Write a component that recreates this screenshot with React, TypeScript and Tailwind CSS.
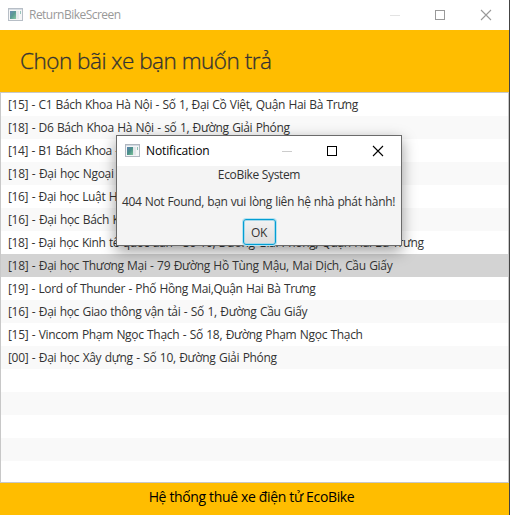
import React from "react";

const rows: { text: string; tracking: string }[] = [
  { text: "[15] - C1 Bách Khoa Hà Nội - Số 1, Đại Cồ Việt, Quận Hai Bà Trưng", tracking: "tracking-[-0.37px]" },
  { text: "[18] - D6 Bách Khoa Hà Nội - số 1, Đường Giải Phóng", tracking: "tracking-[-0.35px]" },
  { text: "[14] - B1 Bách Khoa - Số 1", tracking: "tracking-[-0.4px]" },
  { text: "[18] - Đại học Ngoại", tracking: "tracking-[-0.31px]" },
  { text: "[16] - Đại học Luật Hà Nội", tracking: "tracking-[-0.35px]" },
  { text: "[16] - Đại học Bách Khoa", tracking: "tracking-[-0.31px]" },
  { text: "[18] - Đại học Kinh tế quốc dân - Số 10, Đường Giải Phóng, Quận Hai Bà Trưng", tracking: "tracking-[-0.37px]" },
  { text: "[18] - Đại học Thương Mại - 79 Đường Hồ Tùng Mậu, Mai Dịch, Cầu Giấy", tracking: "tracking-[-0.33px]" },
  { text: "[19] - Lord of Thunder - Phố Hồng Mai,Quận Hai Bà Trưng", tracking: "tracking-[-0.38px]" },
  { text: "[16] - Đại học Giao thông vận tải - Số 1, Đường Cầu Giấy", tracking: "tracking-[-0.33px]" },
  { text: "[15] - Vincom Phạm Ngọc Thạch - Số 18, Đường Phạm Ngọc Thạch", tracking: "tracking-[-0.33px]" },
  { text: "[00] - Đại học Xây dựng - Số 10, Đường Giải Phóng", tracking: "tracking-[-0.32px]" },
  { text: "", tracking: "" },
  { text: "", tracking: "" },
  { text: "", tracking: "" },
  { text: "", tracking: "" },
];

const selected = 7;

function AppIcon({ faded }: { faded?: boolean }) {
  return (
    <svg width="15" height="13" viewBox="0 0 15 13" className={faded ? "opacity-90" : ""} shapeRendering="crispEdges">
      <defs>
        <linearGradient id="pane" x1="0" y1="0" x2="1" y2="1">
          <stop offset="0" stopColor="#5a80b0" />
          <stop offset="0.5" stopColor="#4a9088" />
          <stop offset="1" stopColor="#7cc49a" />
        </linearGradient>
      </defs>
      <rect x="0.5" y="0.5" width="14" height="12" fill="#f4f6f7" stroke="#b0b7c0" />
      <rect x="1" y="1" width="13" height="1" fill="#d3dae2" />
      <rect x="2" y="3" width="6" height="8" fill="url(#pane)" />
      <rect x="8" y="3" width="3" height="8" fill="#e3e7ea" />
      <rect x="12" y="3" width="1" height="3" fill="#8fc0b4" />
    </svg>
  );
}

function WindowButtons({ color, minColor }: { color: string; minColor: string }) {
  return (
    <svg width="104" height="12" viewBox="0 0 104 12" fill="none">
      <path d="M1 6.5H11" stroke={minColor} />
      <rect x="46.5" y="1.5" width="9" height="9" stroke={color} />
      <path d="M92 1L102 11M102 1L92 11" stroke={color} strokeWidth="1.1" />
    </svg>
  );
}

export default function App() {
  return (
    <div className="relative flex h-[515px] w-[510px] flex-col overflow-hidden border-r border-[#444] bg-[#ffbd00] font-['Open_Sans','Noto_Sans',sans-serif] text-[12px] text-[#333]">
      <header className="flex h-[30px] shrink-0 items-center bg-white pb-px pl-2">
        <AppIcon faded />
        <span className="ml-[6px] grow whitespace-nowrap pt-px tracking-[-0.52px] text-[#999]">ReturnBikeScreen</span>
        <div className="mr-[16px]">
          <WindowButtons color="#999" minColor="#e3e3e3" />
        </div>
      </header>
      <h1 className="flex h-[62px] shrink-0 items-center whitespace-nowrap pl-5 text-[22.5px] font-light tracking-[-0.5px] [-webkit-text-stroke:0.3px_#333]">
        Chọn bãi xe bạn muốn trả
      </h1>
      <ul className="flex h-[391px] shrink-0 flex-col overflow-hidden border border-[#c8c8c8] bg-white">
        {rows.map((row, i) => (
          <li
            key={i}
            className={`flex h-[23px] shrink-0 items-center whitespace-nowrap pl-[7px] [word-spacing:0.7px] ${
              i === selected ? "bg-[#d3d3d3]" : i % 2 ? "bg-[#f9f9f9]" : "bg-white"
            }`}
          >
            <span className={row.tracking}>{row.text}</span>
          </li>
        ))}
      </ul>
      <footer className="flex h-[27px] items-center justify-center pr-[6px] text-[14px] text-black">
        <span className="whitespace-nowrap tracking-[-0.35px]">Hệ thống thuê xe điện tử EcoBike</span>
      </footer>

      <section className="absolute left-[116px] top-[135px] flex h-[111px] w-[286px] flex-col border border-[#6b6b6b] bg-[#f4f4f4] shadow-[0_5px_14px_rgba(0,0,0,0.4)]">
        <div className="flex h-[30px] shrink-0 items-center bg-white pb-px pl-2">
          <AppIcon />
          <span className="ml-[6px] grow whitespace-nowrap pt-px tracking-[-0.12px] text-black">Notification</span>
          <div className="mr-[16px]">
            <WindowButtons color="#000" minColor="#ccc" />
          </div>
        </div>
        <p className="flex h-[18px] items-center justify-center whitespace-nowrap">
          <span className="tracking-[-0.34px]">EcoBike System</span>
        </p>
        <p className="mt-[9px] flex h-[18px] items-center justify-center whitespace-nowrap pr-px">
          <span className="tracking-[-0.36px] [word-spacing:0.5px]">404 Not Found, bạn vui lòng liên hệ nhà phát hành!</span>
        </p>
        <button className="ml-[126px] mt-[8px] h-[26px] w-[33px] shrink-0 rounded-[3px] border border-[#039ed3] bg-linear-to-b from-[#f2f2f2] to-[#dedede] pr-px text-center leading-[25px] tracking-[-0.4px] shadow-[0_0_0_1px_#b5e2f0,inset_0_0_0_1px_#a5d8ea]">
          OK
        </button>
      </section>
    </div>
  );
}
